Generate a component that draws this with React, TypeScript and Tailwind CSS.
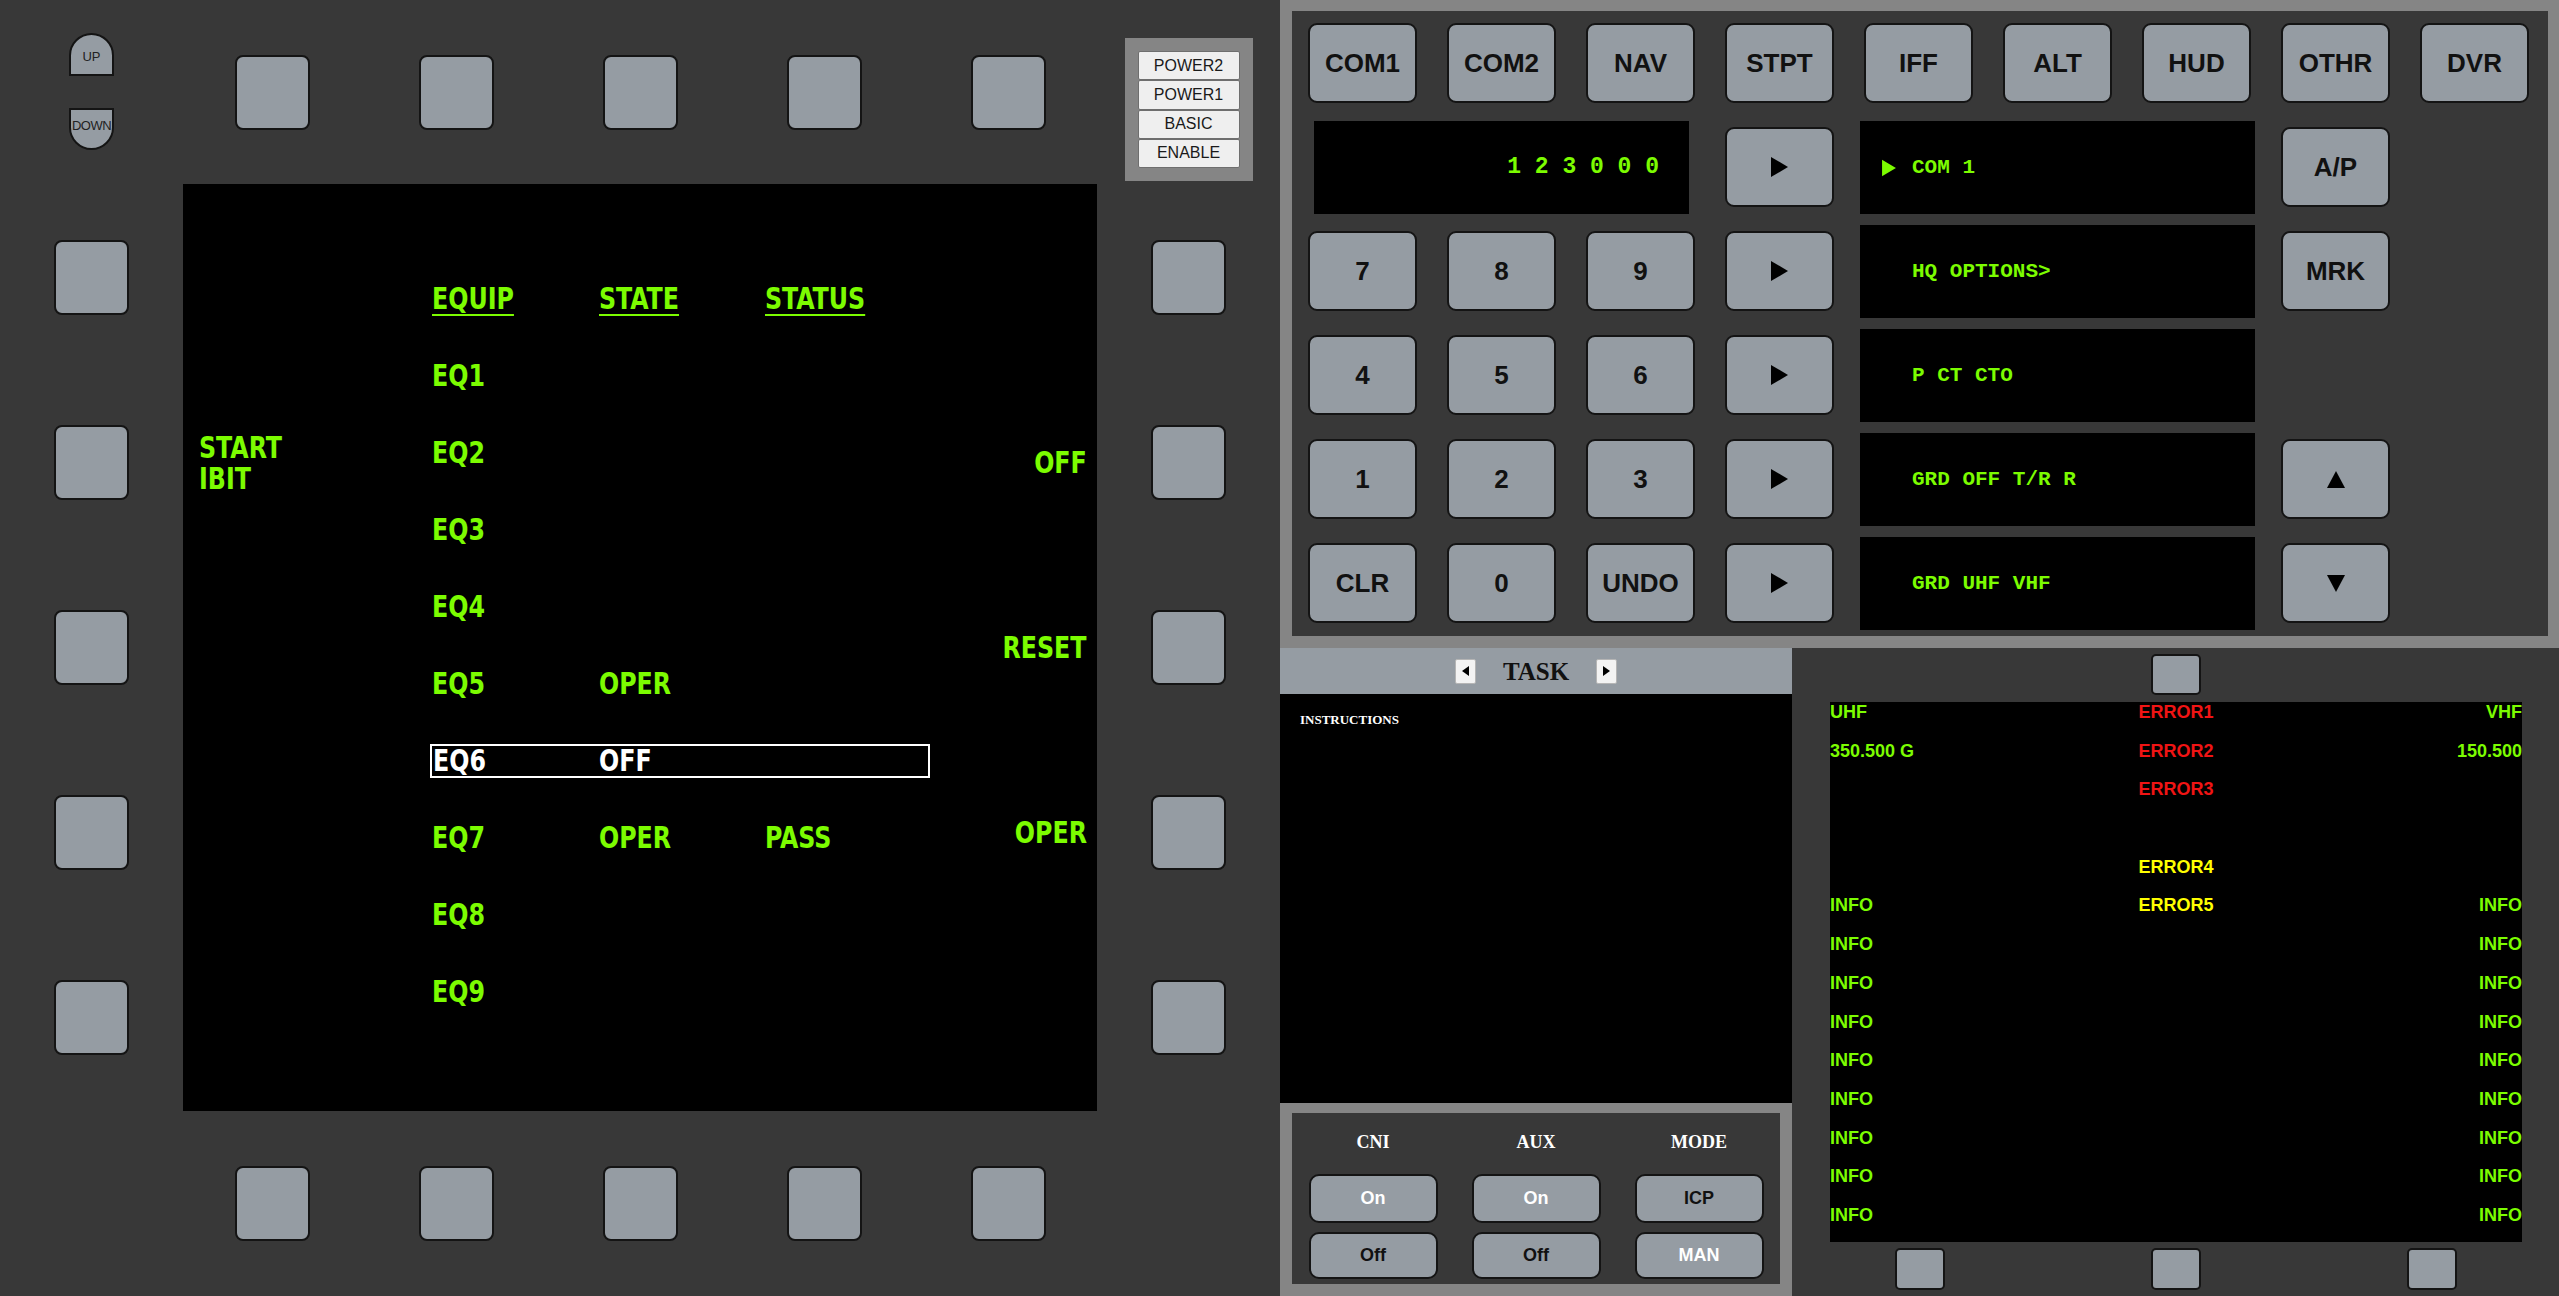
import React from "react";

const SANS = "font-['Liberation_Sans',Arial,sans-serif]";
const NARROW = "font-['Liberation_Sans_Narrow','DejaVu_Sans_Condensed','Liberation_Sans',sans-serif]";
const SERIF = "font-['Liberation_Serif','Times_New_Roman',serif]";
const MONO = "font-['Liberation_Mono','Courier_New',monospace]";

function Osb() {
  return <div className="w-[75px] h-[75px] rounded-[8px] border-2 border-[#141414] bg-[#959ca3]" />;
}

function SmallBtn() {
  return <div className="w-[50px] h-[42px] rounded-[5px] border-2 border-[#141414] bg-[#959ca3]" />;
}

function TriRight({ color = "#000", w = 19, h = 22 }: { color?: string; w?: number; h?: number }) {
  return (
    <svg width={w} height={h} viewBox="0 0 19 22">
      <polygon points="1,1 18,11 1,21" fill={color} />
    </svg>
  );
}

function T({ children, right }: { children?: React.ReactNode; right?: boolean }) {
  return (
    <span className={`inline-block scale-x-[0.88] whitespace-pre ${right ? "origin-right" : "origin-left"}`}>{children}</span>
  );
}

function Mfd() {
  const rows: { a: string; b?: string; c?: string; hl?: boolean }[] = [
    { a: "EQ1" },
    { a: "EQ2" },
    { a: "EQ3" },
    { a: "EQ4" },
    { a: "EQ5", b: "OPER" },
    { a: "EQ6", b: "OFF", hl: true },
    { a: "EQ7", b: "OPER", c: "PASS" },
    { a: "EQ8" },
    { a: "EQ9" },
  ];
  const rightLabels = ["", "OFF", "RESET", "OPER", ""];
  return (
    <div className="grid w-[1280px] h-[1296px] shrink-0 grid-cols-[183px_914px_183px] grid-rows-[184px_927px_185px] bg-[#383838]">
      {/* top-left: up/down */}
      <div className={`flex flex-col items-center pt-[33px] gap-[32px] ${SANS}`}>
        <div className="w-[45px] h-[43px] rounded-t-full border-2 border-[#141414] bg-[#959ca3] flex items-center justify-center text-[13px] text-[#222] pt-[4px]">
          UP
        </div>
        <div className="w-[45px] h-[42px] rounded-b-full border-2 border-[#141414] bg-[#959ca3] flex items-center justify-center text-[13px] text-[#222] pb-[6px] tracking-[-0.5px]">
          DOWN
        </div>
      </div>
      {/* top buttons */}
      <div className="flex items-center justify-center gap-[109px]">
        <Osb />
        <Osb />
        <Osb />
        <Osb />
        <Osb />
      </div>
      {/* power box */}
      <div className="flex justify-center pt-[38px]">
        <div className="w-[128px] h-[143px] bg-[#858585] p-[13px] flex flex-col">
          {["POWER2", "POWER1", "BASIC", "ENABLE"].map((t) => (
            <div
              key={t}
              className={`flex-1 flex items-center justify-center bg-[#efefef] border border-[#6e6e6e] rounded-[2px] text-[16px] text-[#1a1a1a] ${SANS}`}
            >
              {t}
            </div>
          ))}
        </div>
      </div>
      {/* left buttons */}
      <div className="flex flex-col items-center justify-center gap-[110px]">
        <Osb />
        <Osb />
        <Osb />
        <Osb />
        <Osb />
      </div>
      {/* screen */}
      <div className={`bg-black flex text-[30px] font-bold text-[#7cfc00] ${NARROW}`}>
        <div className="w-[249px] shrink-0 flex flex-col justify-center gap-[110px] pl-[16px]">
          {[0, 1, 2, 3, 4].map((i) => (
            <div key={i} className="h-[75px] flex flex-col justify-center items-start leading-[31px]">
              {i === 1 ? (
                <>
                  <T>START</T>
                  <T>IBIT</T>
                </>
              ) : null}
            </div>
          ))}
        </div>
        <div className="w-[520px] shrink-0 flex flex-col pt-[76px]">
          <div className="h-[77px] flex items-center leading-none">
            <span className="w-[167px]">
              <T>
                <span className="underline underline-offset-[5px] decoration-2">EQUIP</span>
              </T>
            </span>
            <span className="w-[166px]">
              <T>
                <span className="underline underline-offset-[5px] decoration-2">STATE</span>
              </T>
            </span>
            <span>
              <T>
                <span className="underline underline-offset-[5px] decoration-2">STATUS</span>
              </T>
            </span>
          </div>
          {rows.map((r) =>
            r.hl ? (
              <div key={r.a} className="h-[77px] flex items-center leading-none">
                <div className="-ml-[2px] pl-[1px] w-[500px] h-[34px] border-2 border-white flex items-center text-white">
                  <span className="w-[166px]">
                    <T>{r.a}</T>
                  </span>
                  <span className="w-[166px]">
                    <T>{r.b}</T>
                  </span>
                  <span>
                    <T>{r.c}</T>
                  </span>
                </div>
              </div>
            ) : (
              <div key={r.a} className="h-[77px] flex items-center leading-none">
                <span className="w-[167px]">
                  <T>{r.a}</T>
                </span>
                <span className="w-[166px]">
                  <T>{r.b}</T>
                </span>
                <span>
                  <T>{r.c}</T>
                </span>
              </div>
            )
          )}
        </div>
        <div className="flex-1 flex flex-col justify-center items-end gap-[110px] pr-[10px]">
          {rightLabels.map((t, i) => (
            <div key={i} className="h-[75px] flex items-center leading-none">
              {t ? <T right>{t}</T> : null}
            </div>
          ))}
        </div>
      </div>
      {/* right buttons */}
      <div className="flex flex-col items-center justify-center gap-[110px]">
        <Osb />
        <Osb />
        <Osb />
        <Osb />
        <Osb />
      </div>
      <div />
      <div className="flex items-center justify-center gap-[109px]">
        <Osb />
        <Osb />
        <Osb />
        <Osb />
        <Osb />
      </div>
      <div />
    </div>
  );
}

function IcpBtn({ children }: { children?: React.ReactNode }) {
  return (
    <div
      className={`rounded-[9px] border-2 border-[#141414] bg-[#959ca3] flex items-center justify-center text-[26px] font-bold text-[#111] ${SANS}`}
    >
      {children}
    </div>
  );
}

function ArrowBtn() {
  return (
    <IcpBtn>
      <TriRight />
    </IcpBtn>
  );
}

function Lcd({ text, mark }: { text: string; mark?: boolean }) {
  return (
    <div className={`col-span-3 -mt-[6px] -mb-[7px] -mx-[4px] bg-black flex items-center pl-[21px] text-[21px] font-bold text-[#7cfc00] ${MONO}`}>
      <div className="w-[31px] flex items-center">{mark ? <TriRight color="#7cfc00" w={16} h={18} /> : null}</div>
      <span className="whitespace-pre">{text}</span>
    </div>
  );
}

function Icp() {
  const top = ["COM1", "COM2", "NAV", "STPT", "IFF", "ALT", "HUD", "OTHR", "DVR"];
  return (
    <div className="h-[648px] bg-[#858585] pt-[11px] pl-[12px] pr-[11px] pb-[12px]">
      <div className="h-full bg-[#383838] grid grid-cols-[repeat(9,109px)] grid-rows-[repeat(6,80px)] gap-x-[30px] gap-y-[24px] pl-[16px] pt-[12px]">
        {top.map((t) => (
          <IcpBtn key={t}>{t}</IcpBtn>
        ))}
        {/* row 2 */}
        <div className={`col-span-3 -mt-[6px] -mb-[7px] mx-[6px] bg-black flex items-center justify-end pr-[30px] text-[23px] font-bold text-[#7cfc00] ${MONO}`}>
          <span className="whitespace-pre">1 2 3 0 0 0</span>
        </div>
        <ArrowBtn />
        <Lcd text="COM 1" mark />
        <IcpBtn>A/P</IcpBtn>
        <div />
        {/* row 3 */}
        <IcpBtn>7</IcpBtn>
        <IcpBtn>8</IcpBtn>
        <IcpBtn>9</IcpBtn>
        <ArrowBtn />
        <Lcd text="HQ OPTIONS>" />
        <IcpBtn>MRK</IcpBtn>
        <div />
        {/* row 4 */}
        <IcpBtn>4</IcpBtn>
        <IcpBtn>5</IcpBtn>
        <IcpBtn>6</IcpBtn>
        <ArrowBtn />
        <Lcd text="P CT CTO" />
        <div />
        <div />
        {/* row 5 */}
        <IcpBtn>1</IcpBtn>
        <IcpBtn>2</IcpBtn>
        <IcpBtn>3</IcpBtn>
        <ArrowBtn />
        <Lcd text="GRD OFF T/R R" />
        <IcpBtn>
          <svg width="20" height="19" viewBox="0 0 20 19">
            <polygon points="10,1 19,18 1,18" fill="#000" />
          </svg>
        </IcpBtn>
        <div />
        {/* row 6 */}
        <IcpBtn>CLR</IcpBtn>
        <IcpBtn>0</IcpBtn>
        <IcpBtn>UNDO</IcpBtn>
        <ArrowBtn />
        <Lcd text="GRD UHF VHF" />
        <IcpBtn>
          <svg width="20" height="19" viewBox="0 0 20 19">
            <polygon points="1,1 19,1 10,18" fill="#000" />
          </svg>
        </IcpBtn>
        <div />
      </div>
    </div>
  );
}

function TaskArrow({ left }: { left?: boolean }) {
  return (
    <div className="w-[21px] h-[25px] bg-[#f3f3f3] border border-[#b5b5b5] rounded-[2px] flex items-center justify-center">
      <svg width="7" height="10" viewBox="0 0 7 10">
        {left ? <polygon points="7,0 0,5 7,10" fill="#000" /> : <polygon points="0,0 7,5 0,10" fill="#000" />}
      </svg>
    </div>
  );
}

function CniBtn({ children, light }: { children: React.ReactNode; light?: boolean }) {
  return (
    <div
      className={`w-full rounded-[10px] border-2 border-[#141414] bg-[#959ca3] flex items-center justify-center text-[18px] font-bold ${SANS} ${
        light ? "text-white" : "text-[#111]"
      }`}
    >
      {children}
    </div>
  );
}

function Task() {
  const cols = [
    { l: "CNI", a: "On", aw: true, b: "Off", bw: false },
    { l: "AUX", a: "On", aw: true, b: "Off", bw: false },
    { l: "MODE", a: "ICP", aw: false, b: "MAN", bw: true },
  ];
  return (
    <div className="w-[512px] shrink-0 flex flex-col">
      <div className="h-[46px] bg-[#959ca3] flex items-center justify-center gap-[27px]">
        <TaskArrow left />
        <span className={`text-[25px] font-bold text-[#111] leading-none ${SERIF}`}>TASK</span>
        <TaskArrow />
      </div>
      <div className={`flex-1 bg-black pl-[20px] pt-[16px] text-[13px] font-bold text-white ${SERIF}`}>INSTRUCTIONS</div>
      <div className="h-[193px] bg-[#858585] pt-[10px] px-[12px] pb-[12px]">
        <div className="h-full bg-[#383838] flex justify-center gap-[34px] pt-[18px]">
          {cols.map((c) => (
            <div key={c.l} className="w-[129px] flex flex-col items-center">
              <div className={`h-[22px] leading-[22px] text-[18px] font-bold text-white ${SERIF}`}>{c.l}</div>
              <div className="w-full h-[49px] mt-[21px] flex">
                <CniBtn light={c.aw}>{c.a}</CniBtn>
              </div>
              <div className="w-full h-[47px] mt-[9px] flex">
                <CniBtn light={c.bw}>{c.b}</CniBtn>
              </div>
            </div>
          ))}
        </div>
      </div>
    </div>
  );
}

function Errors() {
  const G = "text-[#7cfc00]";
  const R = "text-[#f01414]";
  const Y = "text-[#ffff00]";
  const rows: [string, string, string, string][] = [
    ["UHF", "ERROR1", R, "VHF"],
    ["350.500 G", "ERROR2", R, "150.500"],
    ["", "ERROR3", R, ""],
    ["", "", R, ""],
    ["", "ERROR4", Y, ""],
    ["INFO", "ERROR5", Y, "INFO"],
    ["INFO", "", R, "INFO"],
    ["INFO", "", R, "INFO"],
    ["INFO", "", R, "INFO"],
    ["INFO", "", R, "INFO"],
    ["INFO", "", R, "INFO"],
    ["INFO", "", R, "INFO"],
    ["INFO", "", R, "INFO"],
    ["INFO", "", R, "INFO"],
  ];
  return (
    <div className="flex-1 bg-[#383838] flex flex-col pl-[38px] pr-[37px]">
      <div className="h-[54px] flex items-start justify-center pt-[6px]">
        <div className="w-[50px] h-[41px] rounded-[5px] border-2 border-[#141414] bg-[#959ca3]" />
      </div>
      <div className={`h-[540px] bg-black flex flex-col gap-y-[18.7px] text-[18px] font-bold ${SANS}`}>
        {rows.map((r, i) => (
          <div key={i} className="h-[20px] leading-[20px] grid grid-cols-3">
            <span className={`${G} text-left`}>{r[0]}</span>
            <span className={`${r[2]} text-center`}>{r[1]}</span>
            <span className={`${G} text-right`}>{r[3]}</span>
          </div>
        ))}
      </div>
      <div className="flex justify-between px-[65px] pt-[6px]">
        <SmallBtn />
        <SmallBtn />
        <SmallBtn />
      </div>
    </div>
  );
}

export default function App() {
  return (
    <div className="w-[2559px] h-[1296px] flex bg-[#383838] overflow-hidden">
      <Mfd />
      <div className="flex-1 flex flex-col">
        <Icp />
        <div className="flex-1 flex">
          <Task />
          <Errors />
        </div>
      </div>
    </div>
  );
}
